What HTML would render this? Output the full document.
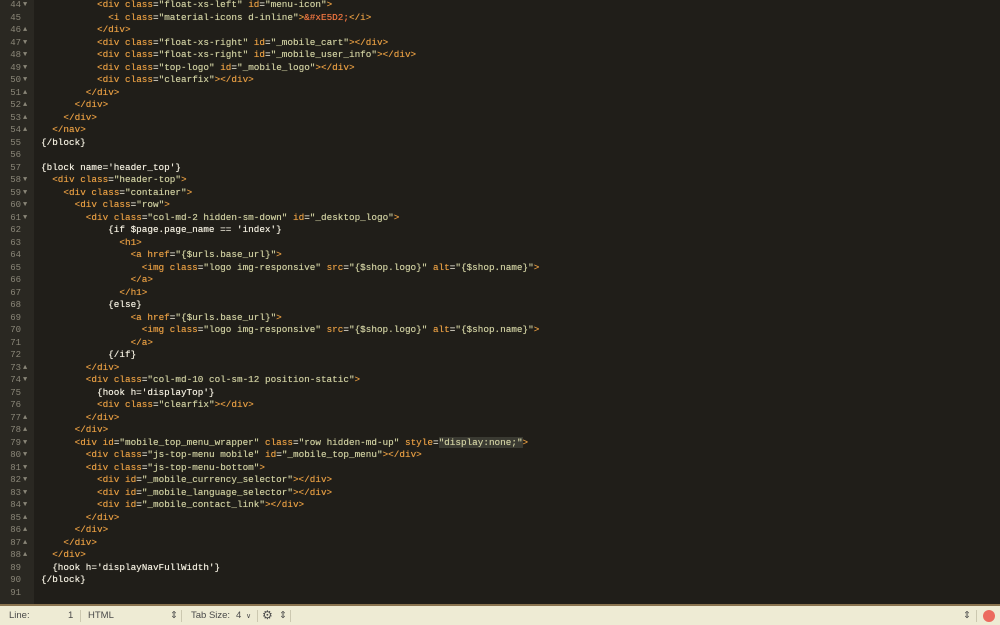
<!DOCTYPE html><html><head><meta charset="utf-8"><style>
body{margin:0;width:1000px;height:625px;overflow:hidden;background:#201e19;font-family:"Liberation Mono",monospace;}
#g{position:absolute;left:0;top:0;width:34px;height:605px;background:#2a2822;}
#c{position:absolute;left:0;top:-1px;}
.l{height:12.5px;line-height:12.5px;font-size:9.33px;white-space:pre;position:relative;}
.n{position:absolute;left:0;width:21px;text-align:right;color:#8a8678;font-size:9px;}
.a{position:absolute;left:23px;color:#8a8678;font-size:7px;}
.t{position:absolute;left:41px;color:#f2eedf;text-shadow:0 0 0.4px currentColor;}
.k{color:#e49c42}.s{color:#cdcd9f}.e{color:#ea7440}
.hl{background:#3a3a32}
#sb{position:absolute;left:0;top:604px;width:1000px;height:21px;background:#eeebd4;border-top:2px solid #8a7450;box-sizing:border-box;font-family:"Liberation Sans",sans-serif;font-size:9.5px;color:#4a4a4a;}
#sb span{position:absolute;top:4px;}
.sep{position:absolute;top:4px;width:1px;height:12px;background:#ccc8b0}
</style></head><body>
<div id="g"></div>
<div id="c">
<div class="l"><span class="n">44</span><span class="a">▼</span><span class="t">          <span class="k">&lt;div</span> <span class="k">class</span>=<span class="s">"float-xs-left"</span> <span class="k">id</span>=<span class="s">"menu-icon"</span><span class="k">&gt;</span></span></div>
<div class="l"><span class="n">45</span><span class="t">            <span class="k">&lt;i</span> <span class="k">class</span>=<span class="s">"material-icons d-inline"</span><span class="k">&gt;</span><span class="e">&amp;#xE5D2;</span><span class="k">&lt;/i&gt;</span></span></div>
<div class="l"><span class="n">46</span><span class="a">▲</span><span class="t">          <span class="k">&lt;/div&gt;</span></span></div>
<div class="l"><span class="n">47</span><span class="a">▼</span><span class="t">          <span class="k">&lt;div</span> <span class="k">class</span>=<span class="s">"float-xs-right"</span> <span class="k">id</span>=<span class="s">"_mobile_cart"</span><span class="k">&gt;&lt;/div&gt;</span></span></div>
<div class="l"><span class="n">48</span><span class="a">▼</span><span class="t">          <span class="k">&lt;div</span> <span class="k">class</span>=<span class="s">"float-xs-right"</span> <span class="k">id</span>=<span class="s">"_mobile_user_info"</span><span class="k">&gt;&lt;/div&gt;</span></span></div>
<div class="l"><span class="n">49</span><span class="a">▼</span><span class="t">          <span class="k">&lt;div</span> <span class="k">class</span>=<span class="s">"top-logo"</span> <span class="k">id</span>=<span class="s">"_mobile_logo"</span><span class="k">&gt;&lt;/div&gt;</span></span></div>
<div class="l"><span class="n">50</span><span class="a">▼</span><span class="t">          <span class="k">&lt;div</span> <span class="k">class</span>=<span class="s">"clearfix"</span><span class="k">&gt;&lt;/div&gt;</span></span></div>
<div class="l"><span class="n">51</span><span class="a">▲</span><span class="t">        <span class="k">&lt;/div&gt;</span></span></div>
<div class="l"><span class="n">52</span><span class="a">▲</span><span class="t">      <span class="k">&lt;/div&gt;</span></span></div>
<div class="l"><span class="n">53</span><span class="a">▲</span><span class="t">    <span class="k">&lt;/div&gt;</span></span></div>
<div class="l"><span class="n">54</span><span class="a">▲</span><span class="t">  <span class="k">&lt;/nav&gt;</span></span></div>
<div class="l"><span class="n">55</span><span class="t">{/block}</span></div>
<div class="l"><span class="n">56</span><span class="t"></span></div>
<div class="l"><span class="n">57</span><span class="t">{block name='header_top'}</span></div>
<div class="l"><span class="n">58</span><span class="a">▼</span><span class="t">  <span class="k">&lt;div</span> <span class="k">class</span>=<span class="s">"header-top"</span><span class="k">&gt;</span></span></div>
<div class="l"><span class="n">59</span><span class="a">▼</span><span class="t">    <span class="k">&lt;div</span> <span class="k">class</span>=<span class="s">"container"</span><span class="k">&gt;</span></span></div>
<div class="l"><span class="n">60</span><span class="a">▼</span><span class="t">      <span class="k">&lt;div</span> <span class="k">class</span>=<span class="s">"row"</span><span class="k">&gt;</span></span></div>
<div class="l"><span class="n">61</span><span class="a">▼</span><span class="t">        <span class="k">&lt;div</span> <span class="k">class</span>=<span class="s">"col-md-2 hidden-sm-down"</span> <span class="k">id</span>=<span class="s">"_desktop_logo"</span><span class="k">&gt;</span></span></div>
<div class="l"><span class="n">62</span><span class="t">            {if $page.page_name == 'index'}</span></div>
<div class="l"><span class="n">63</span><span class="t">              <span class="k">&lt;h1&gt;</span></span></div>
<div class="l"><span class="n">64</span><span class="t">                <span class="k">&lt;a</span> <span class="k">href</span>=<span class="s">"{$urls.base_url}"</span><span class="k">&gt;</span></span></div>
<div class="l"><span class="n">65</span><span class="t">                  <span class="k">&lt;img</span> <span class="k">class</span>=<span class="s">"logo img-responsive"</span> <span class="k">src</span>=<span class="s">"{$shop.logo}"</span> <span class="k">alt</span>=<span class="s">"{$shop.name}"</span><span class="k">&gt;</span></span></div>
<div class="l"><span class="n">66</span><span class="t">                <span class="k">&lt;/a&gt;</span></span></div>
<div class="l"><span class="n">67</span><span class="t">              <span class="k">&lt;/h1&gt;</span></span></div>
<div class="l"><span class="n">68</span><span class="t">            {else}</span></div>
<div class="l"><span class="n">69</span><span class="t">                <span class="k">&lt;a</span> <span class="k">href</span>=<span class="s">"{$urls.base_url}"</span><span class="k">&gt;</span></span></div>
<div class="l"><span class="n">70</span><span class="t">                  <span class="k">&lt;img</span> <span class="k">class</span>=<span class="s">"logo img-responsive"</span> <span class="k">src</span>=<span class="s">"{$shop.logo}"</span> <span class="k">alt</span>=<span class="s">"{$shop.name}"</span><span class="k">&gt;</span></span></div>
<div class="l"><span class="n">71</span><span class="t">                <span class="k">&lt;/a&gt;</span></span></div>
<div class="l"><span class="n">72</span><span class="t">            {/if}</span></div>
<div class="l"><span class="n">73</span><span class="a">▲</span><span class="t">        <span class="k">&lt;/div&gt;</span></span></div>
<div class="l"><span class="n">74</span><span class="a">▼</span><span class="t">        <span class="k">&lt;div</span> <span class="k">class</span>=<span class="s">"col-md-10 col-sm-12 position-static"</span><span class="k">&gt;</span></span></div>
<div class="l"><span class="n">75</span><span class="t">          {hook h='displayTop'}</span></div>
<div class="l"><span class="n">76</span><span class="t">          <span class="k">&lt;div</span> <span class="k">class</span>=<span class="s">"clearfix"</span><span class="k">&gt;&lt;/div&gt;</span></span></div>
<div class="l"><span class="n">77</span><span class="a">▲</span><span class="t">        <span class="k">&lt;/div&gt;</span></span></div>
<div class="l"><span class="n">78</span><span class="a">▲</span><span class="t">      <span class="k">&lt;/div&gt;</span></span></div>
<div class="l"><span class="n">79</span><span class="a">▼</span><span class="t">      <span class="k">&lt;div</span> <span class="k">id</span>=<span class="s">"mobile_top_menu_wrapper"</span> <span class="k">class</span>=<span class="s">"row hidden-md-up"</span> <span class="k">style</span>=<span class="s hl">"display:none;"</span><span class="k">&gt;</span></span></div>
<div class="l"><span class="n">80</span><span class="a">▼</span><span class="t">        <span class="k">&lt;div</span> <span class="k">class</span>=<span class="s">"js-top-menu mobile"</span> <span class="k">id</span>=<span class="s">"_mobile_top_menu"</span><span class="k">&gt;&lt;/div&gt;</span></span></div>
<div class="l"><span class="n">81</span><span class="a">▼</span><span class="t">        <span class="k">&lt;div</span> <span class="k">class</span>=<span class="s">"js-top-menu-bottom"</span><span class="k">&gt;</span></span></div>
<div class="l"><span class="n">82</span><span class="a">▼</span><span class="t">          <span class="k">&lt;div</span> <span class="k">id</span>=<span class="s">"_mobile_currency_selector"</span><span class="k">&gt;&lt;/div&gt;</span></span></div>
<div class="l"><span class="n">83</span><span class="a">▼</span><span class="t">          <span class="k">&lt;div</span> <span class="k">id</span>=<span class="s">"_mobile_language_selector"</span><span class="k">&gt;&lt;/div&gt;</span></span></div>
<div class="l"><span class="n">84</span><span class="a">▼</span><span class="t">          <span class="k">&lt;div</span> <span class="k">id</span>=<span class="s">"_mobile_contact_link"</span><span class="k">&gt;&lt;/div&gt;</span></span></div>
<div class="l"><span class="n">85</span><span class="a">▲</span><span class="t">        <span class="k">&lt;/div&gt;</span></span></div>
<div class="l"><span class="n">86</span><span class="a">▲</span><span class="t">      <span class="k">&lt;/div&gt;</span></span></div>
<div class="l"><span class="n">87</span><span class="a">▲</span><span class="t">    <span class="k">&lt;/div&gt;</span></span></div>
<div class="l"><span class="n">88</span><span class="a">▲</span><span class="t">  <span class="k">&lt;/div&gt;</span></span></div>
<div class="l"><span class="n">89</span><span class="t">  {hook h='displayNavFullWidth'}</span></div>
<div class="l"><span class="n">90</span><span class="t">{/block}</span></div>
<div class="l"><span class="n">91</span><span class="t"></span></div>
</div>
<div id="sb">
<span style="left:9px">Line:</span><span style="left:68px">1</span><div class="sep" style="left:80px"></div>
<span style="left:88px">HTML</span><span style="left:170px">⇕</span><div class="sep" style="left:181px"></div>
<span style="left:191px">Tab Size:</span><span style="left:236px">4</span><span style="left:246px;font-size:7px;top:6px">∨</span><div class="sep" style="left:257px"></div>
<span style="left:262px;font-size:12px;top:2px">⚙</span><span style="left:279px">⇕</span><div class="sep" style="left:290px"></div>
<span style="left:963px">⇕</span><div class="sep" style="left:976px"></div>
<div style="position:absolute;left:983px;top:4px;width:12px;height:12px;border-radius:50%;background:#ec6a5e"></div>
</div>
</body></html>
